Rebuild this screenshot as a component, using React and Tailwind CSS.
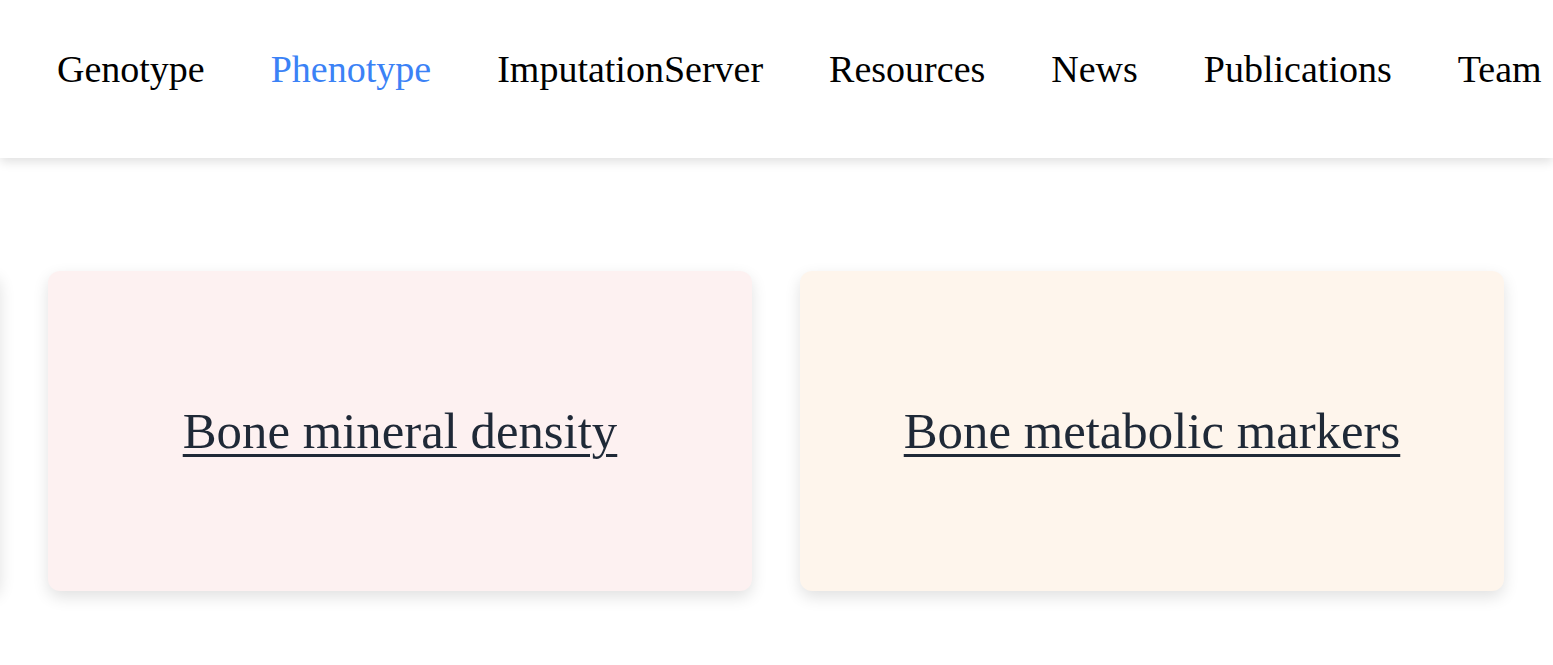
const navItems = [
  { label: "Genotype" },
  { label: "Phenotype", active: true },
  { label: "ImputationServer" },
  { label: "Resources" },
  { label: "News" },
  { label: "Publications" },
  { label: "Team" },
];

// first card sits just off the left edge (carousel scrolled by one)
const cards = [
  { title: "", bg: "bg-[#f0f6fd]" },
  { title: "Bone mineral density", bg: "bg-[#fdf1f1]" },
  { title: "Bone metabolic markers", bg: "bg-[#fef5ec]" },
];

function App() {
  return (
    <div className="min-h-screen overflow-hidden bg-white font-['Liberation_Serif',serif]">
      <header className="relative z-10 bg-white shadow-[0_4px_10px_rgba(0,0,0,0.12)]">
        <nav className="flex gap-[66px] whitespace-nowrap pb-[67px] pl-[57px] pt-[47px] text-[38px] leading-[44px]">
          {navItems.map(({ label, active }) => (
            <a
              className={active ? "text-[#3b82f6]" : "text-black"}
              href="#"
              key={label}
            >
              {label}
            </a>
          ))}
        </nav>
      </header>

      <main className="overflow-hidden pb-12 pt-[113px]">
        <div className="-ml-[704px] flex gap-12">
          {cards.map(({ title, bg }, i) => (
            <div
              className={`flex h-[320px] w-[704px] flex-none items-center justify-center rounded-xl shadow-[0_6px_16px_rgba(0,0,0,0.12)] ${bg}`}
              key={i}
            >
              {title && (
                <a
                  className="text-[50.8px] leading-none text-[#1f2937] underline decoration-[3px] underline-offset-[6px]"
                  href="#"
                >
                  {title}
                </a>
              )}
            </div>
          ))}
        </div>
      </main>
    </div>
  );
}

export default App;
